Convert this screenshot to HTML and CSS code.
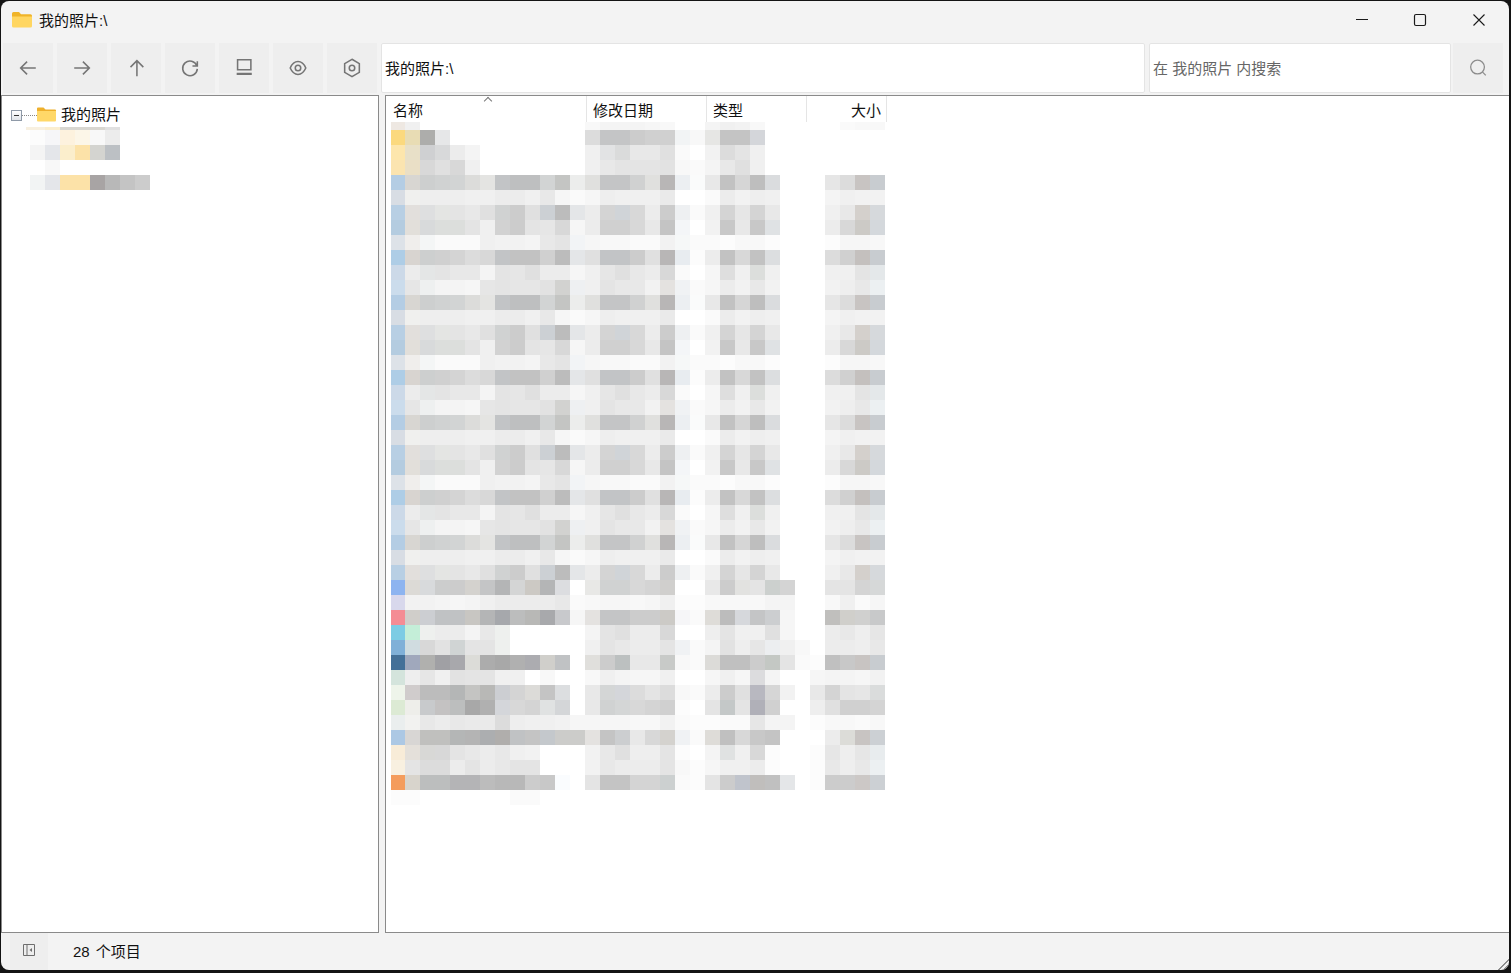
FILE: index.html
```html
<!DOCTYPE html>
<html lang="zh-CN">
<head>
    <meta charset="UTF-8">
    <title>我的照片:\</title>
    <link rel="stylesheet" href="styles.css">
</head>
<body>
    <div class="window">
        <div class="titlebar">
            <svg class="title-icon" width="20" height="17" viewBox="0 0 20 17">
                <path d="M0 2.5A1.5 1.5 0 0 1 1.500 1H7l2 2.200H18.500A1.500 1.500 0 0 1 20 4.700V6H0Z" fill="#f0b429"/>
                <path d="M0 5.500H20V15A1.500 1.500 0 0 1 18.500 16.500H1.500A1.500 1.500 0 0 1 0 15Z" fill="#ffd661"/>
            </svg>
            <span class="title-text">我的照片:\</span>
            <div class="window-buttons">
                <div class="window-button">
                    <svg width="14" height="14" viewBox="0 0 14 14"><path d="M1 6.500H13" stroke="#1a1a1a" fill="none"/></svg>
                </div>
                <div class="window-button">
                    <svg width="14" height="14" viewBox="0 0 14 14"><rect x="1.500" y="1.500" width="11" height="11" rx="1.500" stroke="#1a1a1a" stroke-width="1.200" fill="none"/></svg>
                </div>
                <div class="window-button">
                    <svg width="14" height="14" viewBox="0 0 14 14"><path d="M1.500 1.500L12.500 12.500M12.500 1.500L1.500 12.500" stroke="#1a1a1a" stroke-width="1.100" fill="none"/></svg>
                </div>
            </div>
        </div>

        <div class="toolbar">
            <div class="tool-button">
                <svg class="tool-icon" viewBox="0 0 24 24"><path d="M20.500 12H4M11 5L4 12L11 19"/></svg>
            </div>
            <div class="tool-button">
                <svg class="tool-icon" viewBox="0 0 24 24"><path d="M3.500 12H20M13 5L20 12L13 19"/></svg>
            </div>
            <div class="tool-button">
                <svg class="tool-icon" viewBox="0 0 24 24"><path d="M13 21V4M6 11L13 4L20 11"/></svg>
            </div>
            <div class="tool-button">
                <svg class="tool-icon" viewBox="0 0 24 24"><path d="M19.500 9.500A8 8 0 1 0 20 13M20 4.500V9.800H14.700"/></svg>
            </div>
            <div class="tool-button">
                <svg class="tool-icon" viewBox="0 0 24 24"><path d="M5 3H19.500V14H5Z"/><path d="M4 18.500H20.500" stroke-width="2.400"/></svg>
            </div>
            <div class="tool-button">
                <svg class="tool-icon" viewBox="0 0 24 24"><path d="M3.500 12C5.500 7.500 8.500 5 12 5S18.500 7.500 20.500 12C18.500 16.500 15.500 19 12 19S5.500 16.500 3.500 12Z"/><circle cx="12" cy="12" r="3"/></svg>
            </div>
            <div class="tool-button">
                <svg class="tool-icon" viewBox="0 0 24 24"><path d="M12 2.500L20 7.200V16.800L12 21.500L4 16.800V7.200Z"/><circle cx="12" cy="12" r="3"/></svg>
            </div>
            <div class="address-field">我的照片:\</div>
            <div class="search-group">
                <div class="search-field">在 我的照片 内搜索</div>
                <div class="tool-button">
                    <svg class="tool-icon search-icon" viewBox="0 0 24 24"><circle cx="11.500" cy="11" r="7.500"/><path d="M17 16.500L20.500 20"/></svg>
                </div>
            </div>
        </div>

        <div class="panes">
            <div class="pane tree-pane">
                <div class="tree-row">
                    <span class="expander"></span>
                    <span class="tree-line"></span>
                    <svg class="tree-folder" width="19" height="15" viewBox="0 0 19 15">
                        <path d="M0 1.500A1 1 0 0 1 1 .5H6.500L8.500 2.500H18A1 1 0 0 1 19 3.500V5H0Z" fill="#eeb02c"/>
                        <path d="M0 4H19V13.500A1 1 0 0 1 18 14.500H1A1 1 0 0 1 0 13.500Z" fill="#ffd868"/>
                    </svg>
                    <span class="tree-label">我的照片</span>
                </div>
                <div class="mosaic tree-mosaic" id="treeMosaic"></div>
            </div>

            <div class="pane list-pane">
                <div class="list-header">
                    <div class="column column-name">名称<span class="sort-caret"></span></div>
                    <div class="column column-date">修改日期</div>
                    <div class="column column-type">类型</div>
                    <div class="column column-size">大小</div>
                </div>
                <div class="mosaic list-mosaic" id="listMosaic"></div>
            </div>
        </div>

        <div class="statusbar">
            <div class="status-button">
                <svg width="14" height="14" viewBox="0 0 14 14">
                    <path d="M1.500 1.500H12.500V12.500H1.500ZM5 1.500V12.500" stroke="#6e6e6e" fill="none"/>
                    <path d="M10 5L7.500 7L10 9Z" fill="#6e6e6e"/>
                </svg>
            </div>
            <span class="status-text">28 个项目</span>
            <div class="resize-grip"></div>
        </div>
    </div>
    <script src="mosaic.js"></script>
</body>
</html>
```

FILE: styles.css
```css
* {
    box-sizing: border-box;
}
html, body {
    height: 100%;
}
body {
    margin: 0;
    background-color: #141414;
    font-family: "Liberation Sans", "Noto Sans CJK SC", sans-serif;
    font-size: 15px;
    color: #111;
    overflow: hidden;
}
.window {
    width: 1508px;
    height: 969px;
    margin: 1px 0 0 1px;
    background-color: #f3f3f3;
    border-radius: 8px;
    overflow: hidden;
    display: flex;
    flex-direction: column;
}

/* title bar */
.titlebar {
    height: 41px;
    flex: none;
    display: flex;
    align-items: center;
    padding: 0 1px 5px 11px;
}
.title-icon {
    margin-right: 7px;
}
.title-text {
    flex: 1;
}
.window-buttons {
    display: flex;
    margin-top: 2px;
}
.window-button {
    width: 58.5px;
    height: 30px;
    display: flex;
    align-items: center;
    justify-content: center;
}

/* toolbar */
.toolbar {
    height: 53px;
    flex: none;
    display: flex;
    gap: 4px;
    padding: 1px 6px 2px 2px;
}
.tool-button {
    width: 50px;
    flex: none;
    background-color: #eeeeee;
    display: flex;
    align-items: center;
    justify-content: center;
}
.tool-icon {
    width: 22px;
    height: 22px;
    fill: none;
    stroke: #757575;
    stroke-width: 1.700;
}
.search-icon {
    stroke: #8c8c8c;
    stroke-width: 1.400;
}
.address-field, .search-field {
    background-color: white;
    border: 1px solid #e4e4e4;
    border-radius: 2px;
    display: flex;
    align-items: center;
    padding: 0 3px 2px;
}
.address-field {
    flex: 1;
}
.search-group {
    display: flex;
    gap: 2px;
}
.search-field {
    width: 302px;
    color: #666;
}

/* panes */
.panes {
    flex: 1;
    min-height: 0;
    display: flex;
    gap: 6px;
}
.pane {
    background-color: white;
    border: 1px solid #8a8a8a;
    overflow: hidden;
}
.tree-pane {
    width: 378px;
    flex: none;
}
.list-pane {
    flex: 1;
    border-right: none;
}
.tree-row {
    height: 31px;
    display: flex;
    align-items: center;
    padding: 8px 0 0 9px;
}
.expander {
    width: 11px;
    height: 11px;
    border: 1px solid #8f9aa8;
    background: linear-gradient(#ffffff, #dfe3e8);
    position: relative;
}
.expander::after {
    content: "";
    position: absolute;
    left: 2px;
    right: 2px;
    top: 4px;
    height: 1px;
    background-color: #333;
}
.tree-line {
    width: 15px;
    border-top: 1px dotted #888;
}
.tree-folder {
    margin: 0 5px 2px 0;
}
.tree-label {
    margin-bottom: 5px;
}

/* file list */
.list-header {
    width: 501px;
    height: 26px;
    display: flex;
}
.column {
    border-right: 1px solid #e5e5e5;
    padding: 4px 5px 0 6px;
    line-height: 22px;
    position: relative;
}
.column-name {
    width: 201px;
    padding-left: 7px;
}
.column-date {
    width: 120px;
}
.column-type {
    width: 100px;
}
.column-size {
    width: 80px;
    text-align: right;
}
.sort-caret {
    position: absolute;
    left: 99px;
    top: 2px;
    width: 6px;
    height: 6px;
    border-left: 1px solid #777;
    border-top: 1px solid #777;
    transform: rotate(45deg);
}

/* pixelated content */
.mosaic-row {
    display: flex;
    height: 15px;
}
.mosaic-cell {
    width: 15px;
    flex: none;
}
.list-mosaic {
    margin-left: 5px;
}
.list-mosaic .mosaic-cell:first-child {
    width: 14px;
}
.list-mosaic .mosaic-row:first-child {
    height: 8px;
}
.tree-mosaic {
    margin-left: 24px;
}
.tree-mosaic .mosaic-cell:first-child {
    width: 4px;
}
.tree-mosaic .mosaic-row:first-child {
    height: 3px;
}

/* status bar */
.statusbar {
    height: 37px;
    flex: none;
    display: flex;
    align-items: stretch;
    padding-left: 9px;
    position: relative;
}
.status-button {
    width: 38px;
    background-color: #eeeeee;
    display: flex;
    align-items: center;
    justify-content: center;
    padding-bottom: 3px;
}
.status-text {
    margin-left: 25px;
    align-self: center;
    margin-bottom: 3px;
    word-spacing: 2px;
}
.resize-grip {
    position: absolute;
    right: 0;
    bottom: 0;
    width: 13px;
    height: 13px;
    background: repeating-linear-gradient(135deg, transparent 0 2px, #8e8e8e 2px 4px);
    clip-path: polygon(100% 0, 100% 100%, 0 100%);
}
```

FILE: mosaic.js
```javascript
// each token is a cell: 2 hex digits = grey, 6 hex digits = colour
function toColor(token) {
    return token.length === 2 ? '#' + token + token + token : '#' + token;
}

function drawMosaic(id, rows) {
    const container = document.getElementById(id);
    rows.forEach(row => {
        const rowDiv = document.createElement('div');
        rowDiv.className = 'mosaic-row';
        row.split(' ').forEach(token => {
            const cell = document.createElement('div');
            cell.className = 'mosaic-cell';
            cell.style.backgroundColor = toColor(token);
            rowDiv.appendChild(cell);
        });
        container.appendChild(rowDiv);
    });
}

// the list repeats a few row shapes
const A = 'b4cde4 d8d6d2 cdcfcf d0d2d2 d2d4d4 dcdcda e4e4e2 c2c4c6 bebfc0 bebfc0 d2d4d4 c4c5c3 ecedec e0e0de c4c5c6 c4c5c6 d0d1d1 e0e0de b8b6b6 eceff2 fafbfb e8 c2 d6 be dadcde ff ff ff e6 dc c8c4c2 c8ccd0';
const B = 'd8dde4 f0f0ee ee ee ee f0 f0 ec ec f0 e8 f6 fa f6 ee f0 f0 f0 ea ff ff fa ec f2 ee f0 ff ff ff f4 f0 f2 f2';
const C = 'b8cfe4 e2dfdc dedfe0 e4e5e3 e4 e8 e0 d0d2d2 cc e0 ccd0d4 bc e4e6e8 ec d4 d0d4d8 d8 ec cc eef0f2 fa f0 d4 e6 d4 e8 ff ff ff f0 e8 d4d0cc d6d9dc';
const D = 'b4cce0 e2dfda d8dadb dcdedc dcdedc e4 f0 d2 cc e4 e6 d8 f6 ec d0 d0 d8 e8 c4 f4f6f8 ff f2 c8 e8 c8 dfe2e4 ff ff ff ec d8 cccac6 d4d8dc';
const E = 'dde2e8 f0eeec f4f6f6 fa fa fa f0 f2 f2 f4 e8 e4 f2f4f6 f6 f8 f8 fa fa f2 f6f8f8 fa fa fc f8 f8 fc ff ff ff fc f6 f6 f8';
const F = 'aecde6 d8d4d0 cdcfcf d0 d4 dc d8 c2c4c6 c2 c2 d0 bc e4e6e8 e0 c2c4c6 c2c4c6 cc e0 b8b6b6 e8ecf0 fc ec c2 d8 c2 dcdee0 ff ff ff dc d0 c4c0be c8ccd0';
const G = 'ccd9e8 ec e4e6e6 e4 e8 e8 f4 e4 e6 e0 ec ec f6 f0 e6 e0 e8 ec d8 fa ff f6 de f0 dcdedc f0 ff ff ff f0 f0 e4 e4e8ea';
const H = 'cbdcec e6 eef0f0 f4 f4 f6 e6 e4 e6 e6 e2 d2d2d0 eef0f2 f0 e4 e8 e8 f2 e4e2e0 f0f2f4 fa f6 ec f2 e8 f2 ff ff ff f2 ee e8 ecf0f2';

drawMosaic('listMosaic', [
    'eee8e2 f0 ff ff ff ff ff ff ff ff ff ff ff f8 f4 f4 f4 f6 f8 ff ff f4 f0 f2 f8 ff ff ff ff ff fa f8 f8',
    'fbd97e e8dcb4 adadab e6e7e8 ff ff ff ff ff ff ff ff ff dc c4c5c6 c4c5c6 cc d0 d0 f2f4f5 f8 e6e6e4 c4 c4 d4d6da',
    'fde6ac e8e0c8 cfd0d2 d8d9da ec f4 ff ff ff ff ff ff ff f0 e2e3e4 dadbdb e8 e8 e0 fa ff f2 dc e4 f0',
    'fbe4b0 eadfc6 d8 e0 d8 f0 ff ff ff ff ff ff ff f0 e8 e4 e4 e4 e2 f8 fa f4 e8 e0 f0',
    A, B, C, D, E, F, G, H,
    A, B, C, D, E, F, G, H,
    A, B, C, D, E, F, G, H,
    A, B, C,
    '8db4f0 dcdad6 d8dadc cccdcd cc d4d2ce c4c5c6 b4b5b6 d4d5d5 ccc9c4 b4b5b6 dcdde0 ff e8e8e6 d0d2d2 d0d2d2 d8 d4 d0cfcd ff ff e8 cc e2e2e0 e4 ccd0ce d4 ff ff e4 e4 d4 d6d8d8',
    'd8d8ec f2 f2 f4 f6 f4 f0 ec ec ec ec e8 fa f8 f6 f6 f8 f6 f0 fc fc f8 f8 f8 f8 f4 f4 ff ff f8 f0 fa f6',
    'f48c94 d0ceca ccced2 c0c2c4 c0c2c4 c8c6c2 b4b5b6 a6a8ac bcbdbd b8b8b6 a8a9ac c8c9cc f6 e4e2e0 c4c5c6 c4c5c6 cc cc cccac6 f6f6f8 fa dedcd8 bc d6d8dc c4c5c6 ccced0 f6 ff ff c0bfbd d0cfcb d0d0cf c8c9ca',
    '7ccce4 c4eed8 eef0ee ec ec f4 e8 eef0ee ff ff ff ff ff f4 e4 e0 ec ec d8 ff ff ee e4 f0 f0 e0 f6 ff ff ec e8 ee e6',
    '80b0d8 d0dce0 d8 e2 d0d4d4 e4 e4 eef0ee ff ff ff ff ff f0 e4 e8 ec ec e4 f0f2f4 fa f4 e2 ee e6 eceef0 f0 f8 ff ec ec ee e8',
    '447098 a0a8bc b0b0ae a0a0a4 a8a8ac dcdcd8 ac a8 b0 acacb0 d0cfcb c0c2c4 ff e0dfdc cc bcc0c0 e8 e8 c8cac8 f8 fa dcdbd8 c0 c0 cc c4c8c4 e4 fa fc c0 c8 c8c4c2 c8ccd0',
    'd4e4dc ee e6 f0 e2 e4 e4 f0 f0 ff f8 ff ff f8 f0 f4 f6 f6 f0 ff ff f6 f0 f6 dcdcde f4 ff ff f6 f4 f4 f6 f2',
    'eef4ea d0cccc bc bc b4b6b6 c4c4c2 b8b8b6 ccced2 d4 dcdbd8 c4 dcdee0 ff e8 d4d6d6 d4d6da dc e4 dc f8 fa ec cc e0 b8b8c0 d6 f2 ff e8 d4 e4 e6 dadcdc',
    'dcead4 eeeeea c8cacc c4c2c2 bcbebe a8 b0 d4d6da d8 d4 e0e2e2 d4d6d8 ff e8 d0d2d2 d4d6d6 d8 d4 d0 fc ff e4 c4c8c8 e4 b0b0b8 d0 ff ff ee e0 d0 d0 d4',
    'eaeeee f2f2f0 e8 ec e8 ea ea dc ee f0 f0 f2 f6 f6 f6 f6 f8 f8 f2 fa fc fc fa fa e6 f4 f4 ff fc f8 f8 fa f8',
    'acc8e4 d8d6d4 c0c0be c0c0be b4b6b6 b4 acaeb0 b0aeac c0c2c4 c4 c4c8cc ccccca ccccca e4e2e0 c4 ccced0 e8 d8 d4d2ce f0f2f4 fa dedcd8 c0 d8 c8 c4 ff ff ff ec dcdcd8 c8c4c2 ccd0d4',
    'f8ecd8 e4e0da d8d8d6 d8 e4 e8 ec e8 f0 f2 ff ff ff f2 e8 e0 ee ee e4 fc ff f4 e0e2e2 f0 d8 fc ff ff fc e6 ee e6 e8ecee',
    'f8f0e0 e4 dc dc ec e4 ec e8 e4 e4 ff ff ff f2 e8 ec ec ec e4 f8 fc f6 f0 f0 ec fc ff ff fc e8 ee e8 ecf0f2',
    'f49c5c d8d4cc bcbebe bcbebe b4b4b6 b4b4b6 bc b8 b8 cc c8 fafcfe ff e4 c4 c4 d4 d4 ccd0d0 fa fc e4 cc c0c4cc c0bebc c0 e4e6e8 ff fc cc cc ccc8c6 ccd0d4',
    'fc fc ff ff ff ff ff ff fa fa'
]);

drawMosaic('treeMosaic', [
    'f8f0e0 f8f0e0 fbeecf d8d6d0 d8d6d0 d8d6d0 e0',
    'ff fc f6f6f8 fdf2de fcf6e8 f8 ec',
    'ff f4 e4e6ea fbeecc fce2a8 d4d4d0 bcc0c4',
    'ff ff f8',
    'ff f2f4f4 e4e6ea fce2a8 fce2a8 a8a4a4 b8 c4 cc'
]);
```
